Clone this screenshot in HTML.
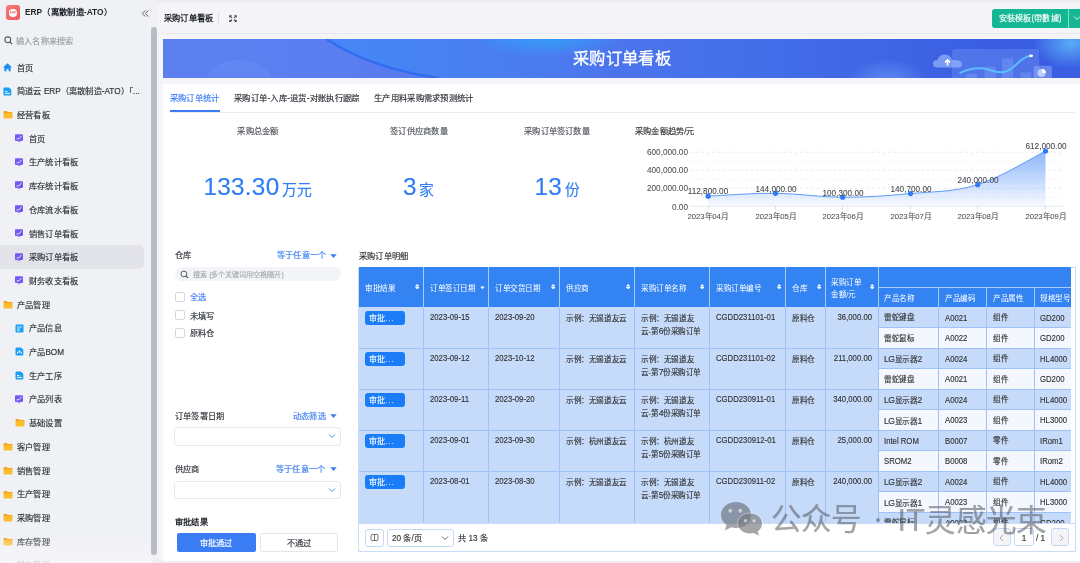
<!DOCTYPE html><html lang="zh-CN"><head><meta charset="utf-8"><style>
*{margin:0;padding:0;box-sizing:border-box}
html,body{width:1080px;height:563px;overflow:hidden;background:#eceef2;font-family:"Liberation Sans", sans-serif;}
#root{position:absolute;left:0;top:0;width:1080px;height:563px;will-change:transform}
.t{position:absolute;white-space:nowrap;-webkit-text-stroke-width:0.15px}
.b{position:absolute}
</style></head><body><div id="root">
<div class="b" style="left:0;top:0;width:157px;height:563px;background:#f0f1f5"></div>
<div class="b" style="left:6.1px;top:5.4px;width:14px;height:14.2px;border-radius:3px;background:linear-gradient(135deg,#f57b7b,#ec5a5a)"></div>
<div class="b" style="left:9px;top:8.7px;width:7.9px;height:7.9px;border-radius:50%;background:#fff"></div>
<svg class="b" style="left:9.8px;top:11.4px" width="6.4" height="2.6" viewBox="0 0 6.4 2.6"><path d="M0.3 0.3 H1.6 M0.3 1.3 H1.4 M0.3 2.3 H1.6 M0.3 0.3 V2.3 M2.3 2.4 V0.3 H3.3 Q3.9 0.3 3.9 0.9 Q3.9 1.4 3.3 1.4 H2.3 M3.1 1.4 L3.9 2.4 M4.6 2.4 V0.3 H5.5 Q6.1 0.3 6.1 0.9 Q6.1 1.5 5.5 1.5 H4.6" stroke="#e95d5d" stroke-width="0.55" fill="none"/></svg>
<div class="t" style="left:25.10px;top:7.30px;font-size:8px;line-height:12.0px;color:#1f2329;font-weight:bold;-webkit-text-stroke-width:0;transform:scale(1.0437,1.0437);transform-origin:left center;">ERP（离散制造-ATO）</div>
<svg class="b" style="left:141px;top:8.7px" width="9" height="9" viewBox="0 0 9 9"><path d="M4.3 1.4 L1.3 4.5 L4.3 7.6 M7.4 1.4 L4.4 4.5 L7.4 7.6" stroke="#5f636d" stroke-width="1" fill="none"/></svg>
<svg class="b" style="left:4px;top:36px" width="9" height="9" viewBox="0 0 9 9"><circle cx="3.8" cy="3.8" r="2.9" stroke="#555a64" stroke-width="1.1" fill="none"/><path d="M6 6 L8.2 8.2" stroke="#555a64" stroke-width="1.2"/></svg>
<div class="t" style="left:15.80px;top:35.70px;font-size:8px;line-height:12.0px;color:#9a9ca3;font-weight:normal;transform:scale(1.0250,1.0250);transform-origin:left center;">输入名称来搜索</div>
<div class="b" style="left:0;top:245px;width:144px;height:24px;background:#e3e4ea;border-radius:0 5px 5px 0"></div>
<svg class="b" style="left:2.7px;top:62.900000000000006px" width="9" height="9" viewBox="0 0 9 9"><path d="M4.5 0.2 L9 4.2 L7.7 4.2 L7.7 8.2 L5.5 8.2 L5.5 5.9 L3.5 5.9 L3.5 8.2 L1.3 8.2 L1.3 4.2 L0 4.2 Z" fill="#1e90f5"/></svg>
<div class="t" style="left:17.20px;top:62.60px;font-size:8px;line-height:12.0px;color:#2b2f36;font-weight:normal;transform:scale(1.0250,1.0250);transform-origin:left center;">首页</div>
<svg class="b" style="left:3px;top:86.6px" width="9" height="9" viewBox="0 0 9 9"><path d="M1.3 0.5 H6 L8.3 2.8 V7.7 Q8.3 8.5 7.5 8.5 H1.3 Q0.5 8.5 0.5 7.7 V1.3 Q0.5 0.5 1.3 0.5Z" fill="#1a9ff2"/><path d="M2 4.6 H4.5 M2 6.4 H7" stroke="#fff" stroke-width="0.9"/></svg>
<div class="t" style="left:17.20px;top:86.30px;font-size:8px;line-height:12.0px;color:#2b2f36;font-weight:normal;transform:scale(1.0250,1.0250);transform-origin:left center;">简道云 ERP（离散制造-ATO）「...</div>
<svg class="b" style="left:3px;top:110.3px" width="10" height="9" viewBox="0 0 10 9"><path d="M0.5 1.8 Q0.5 1 1.3 1 H3.8 L4.8 2 H8.7 Q9.5 2 9.5 2.8 V3.2 H0.5Z" fill="#f7a318"/><path d="M0.5 3 H9.5 V7.6 Q9.5 8.4 8.7 8.4 H1.3 Q0.5 8.4 0.5 7.6Z" fill="#fbbd2e"/></svg>
<div class="t" style="left:17.20px;top:110.00px;font-size:8px;line-height:12.0px;color:#2b2f36;font-weight:normal;transform:scale(1.0250,1.0250);transform-origin:left center;">经营看板</div>
<svg class="b" style="left:15px;top:134.0px" width="9" height="9" viewBox="0 0 9 9"><rect x="0" y="0.3" width="8" height="6.6" rx="0.9" fill="#7459ef"/><rect x="2.7" y="6.8" width="2.6" height="1.5" rx="0.5" fill="#a796f7"/><path d="M1.5 5 L4.3 4.5 L6.5 1.9" stroke="#fff" stroke-width="0.95" fill="none" opacity="0.85"/></svg>
<div class="t" style="left:28.90px;top:133.70px;font-size:8px;line-height:12.0px;color:#2b2f36;font-weight:normal;transform:scale(1.0250,1.0250);transform-origin:left center;">首页</div>
<svg class="b" style="left:15px;top:157.7px" width="9" height="9" viewBox="0 0 9 9"><rect x="0" y="0.3" width="8" height="6.6" rx="0.9" fill="#7459ef"/><rect x="2.7" y="6.8" width="2.6" height="1.5" rx="0.5" fill="#a796f7"/><path d="M1.5 5 L4.3 4.5 L6.5 1.9" stroke="#fff" stroke-width="0.95" fill="none" opacity="0.85"/></svg>
<div class="t" style="left:28.90px;top:157.40px;font-size:8px;line-height:12.0px;color:#2b2f36;font-weight:normal;transform:scale(1.0250,1.0250);transform-origin:left center;">生产统计看板</div>
<svg class="b" style="left:15px;top:181.4px" width="9" height="9" viewBox="0 0 9 9"><rect x="0" y="0.3" width="8" height="6.6" rx="0.9" fill="#7459ef"/><rect x="2.7" y="6.8" width="2.6" height="1.5" rx="0.5" fill="#a796f7"/><path d="M1.5 5 L4.3 4.5 L6.5 1.9" stroke="#fff" stroke-width="0.95" fill="none" opacity="0.85"/></svg>
<div class="t" style="left:28.90px;top:181.10px;font-size:8px;line-height:12.0px;color:#2b2f36;font-weight:normal;transform:scale(1.0250,1.0250);transform-origin:left center;">库存统计看板</div>
<svg class="b" style="left:15px;top:205.1px" width="9" height="9" viewBox="0 0 9 9"><rect x="0" y="0.3" width="8" height="6.6" rx="0.9" fill="#7459ef"/><rect x="2.7" y="6.8" width="2.6" height="1.5" rx="0.5" fill="#a796f7"/><path d="M1.5 5 L4.3 4.5 L6.5 1.9" stroke="#fff" stroke-width="0.95" fill="none" opacity="0.85"/></svg>
<div class="t" style="left:28.90px;top:204.80px;font-size:8px;line-height:12.0px;color:#2b2f36;font-weight:normal;transform:scale(1.0250,1.0250);transform-origin:left center;">仓库流水看板</div>
<svg class="b" style="left:15px;top:228.8px" width="9" height="9" viewBox="0 0 9 9"><rect x="0" y="0.3" width="8" height="6.6" rx="0.9" fill="#7459ef"/><rect x="2.7" y="6.8" width="2.6" height="1.5" rx="0.5" fill="#a796f7"/><path d="M1.5 5 L4.3 4.5 L6.5 1.9" stroke="#fff" stroke-width="0.95" fill="none" opacity="0.85"/></svg>
<div class="t" style="left:28.90px;top:228.50px;font-size:8px;line-height:12.0px;color:#2b2f36;font-weight:normal;transform:scale(1.0250,1.0250);transform-origin:left center;">销售订单看板</div>
<svg class="b" style="left:15px;top:252.5px" width="9" height="9" viewBox="0 0 9 9"><rect x="0" y="0.3" width="8" height="6.6" rx="0.9" fill="#7459ef"/><rect x="2.7" y="6.8" width="2.6" height="1.5" rx="0.5" fill="#a796f7"/><path d="M1.5 5 L4.3 4.5 L6.5 1.9" stroke="#fff" stroke-width="0.95" fill="none" opacity="0.85"/></svg>
<div class="t" style="left:28.90px;top:252.20px;font-size:8px;line-height:12.0px;color:#2b2f36;font-weight:normal;transform:scale(1.0250,1.0250);transform-origin:left center;">采购订单看板</div>
<svg class="b" style="left:15px;top:276.2px" width="9" height="9" viewBox="0 0 9 9"><rect x="0" y="0.3" width="8" height="6.6" rx="0.9" fill="#7459ef"/><rect x="2.7" y="6.8" width="2.6" height="1.5" rx="0.5" fill="#a796f7"/><path d="M1.5 5 L4.3 4.5 L6.5 1.9" stroke="#fff" stroke-width="0.95" fill="none" opacity="0.85"/></svg>
<div class="t" style="left:28.90px;top:275.90px;font-size:8px;line-height:12.0px;color:#2b2f36;font-weight:normal;transform:scale(1.0250,1.0250);transform-origin:left center;">财务收支看板</div>
<svg class="b" style="left:3px;top:299.9px" width="10" height="9" viewBox="0 0 10 9"><path d="M0.5 1.8 Q0.5 1 1.3 1 H3.8 L4.8 2 H8.7 Q9.5 2 9.5 2.8 V3.2 H0.5Z" fill="#f7a318"/><path d="M0.5 3 H9.5 V7.6 Q9.5 8.4 8.7 8.4 H1.3 Q0.5 8.4 0.5 7.6Z" fill="#fbbd2e"/></svg>
<div class="t" style="left:17.20px;top:299.60px;font-size:8px;line-height:12.0px;color:#2b2f36;font-weight:normal;transform:scale(1.0250,1.0250);transform-origin:left center;">产品管理</div>
<svg class="b" style="left:15px;top:323.6px" width="9" height="9" viewBox="0 0 9 9"><rect x="0.5" y="0.5" width="8" height="8" rx="1" fill="#1a9ff2"/><path d="M2 3 H7 M2 5 H5 M2 6.7 H4.5" stroke="#fff" stroke-width="0.8"/></svg>
<div class="t" style="left:28.90px;top:323.30px;font-size:8px;line-height:12.0px;color:#2b2f36;font-weight:normal;transform:scale(1.0250,1.0250);transform-origin:left center;">产品信息</div>
<svg class="b" style="left:15px;top:347.3px" width="9" height="9" viewBox="0 0 9 9"><path d="M1.3 0.5 H6 L8.3 2.8 V7.7 Q8.3 8.5 7.5 8.5 H1.3 Q0.5 8.5 0.5 7.7 V1.3 Q0.5 0.5 1.3 0.5Z" fill="#1a9ff2"/><path d="M4.4 3 V5 M2.5 6.8 V5 H6.3 V6.8" stroke="#fff" stroke-width="0.8" fill="none"/></svg>
<div class="t" style="left:28.90px;top:347.00px;font-size:8px;line-height:12.0px;color:#2b2f36;font-weight:normal;transform:scale(1.0250,1.0250);transform-origin:left center;">产品BOM</div>
<svg class="b" style="left:15px;top:371.0px" width="9" height="9" viewBox="0 0 9 9"><path d="M1.3 0.5 H6 L8.3 2.8 V7.7 Q8.3 8.5 7.5 8.5 H1.3 Q0.5 8.5 0.5 7.7 V1.3 Q0.5 0.5 1.3 0.5Z" fill="#1a9ff2"/><path d="M2 4.6 H4.5 M2 6.4 H7" stroke="#fff" stroke-width="0.9"/></svg>
<div class="t" style="left:28.90px;top:370.70px;font-size:8px;line-height:12.0px;color:#2b2f36;font-weight:normal;transform:scale(1.0250,1.0250);transform-origin:left center;">生产工序</div>
<svg class="b" style="left:15px;top:394.7px" width="9" height="9" viewBox="0 0 9 9"><rect x="0" y="0.3" width="8" height="6.6" rx="0.9" fill="#7459ef"/><rect x="2.7" y="6.8" width="2.6" height="1.5" rx="0.5" fill="#a796f7"/><path d="M1.5 5 L4.3 4.5 L6.5 1.9" stroke="#fff" stroke-width="0.95" fill="none" opacity="0.85"/></svg>
<div class="t" style="left:28.90px;top:394.40px;font-size:8px;line-height:12.0px;color:#2b2f36;font-weight:normal;transform:scale(1.0250,1.0250);transform-origin:left center;">产品列表</div>
<svg class="b" style="left:15px;top:418.4px" width="10" height="9" viewBox="0 0 10 9"><path d="M0.5 1.8 Q0.5 1 1.3 1 H3.8 L4.8 2 H8.7 Q9.5 2 9.5 2.8 V3.2 H0.5Z" fill="#f7a318"/><path d="M0.5 3 H9.5 V7.6 Q9.5 8.4 8.7 8.4 H1.3 Q0.5 8.4 0.5 7.6Z" fill="#fbbd2e"/></svg>
<div class="t" style="left:28.90px;top:418.10px;font-size:8px;line-height:12.0px;color:#2b2f36;font-weight:normal;transform:scale(1.0250,1.0250);transform-origin:left center;">基础设置</div>
<svg class="b" style="left:3px;top:442.1px" width="10" height="9" viewBox="0 0 10 9"><path d="M0.5 1.8 Q0.5 1 1.3 1 H3.8 L4.8 2 H8.7 Q9.5 2 9.5 2.8 V3.2 H0.5Z" fill="#f7a318"/><path d="M0.5 3 H9.5 V7.6 Q9.5 8.4 8.7 8.4 H1.3 Q0.5 8.4 0.5 7.6Z" fill="#fbbd2e"/></svg>
<div class="t" style="left:17.20px;top:441.80px;font-size:8px;line-height:12.0px;color:#2b2f36;font-weight:normal;transform:scale(1.0250,1.0250);transform-origin:left center;">客户管理</div>
<svg class="b" style="left:3px;top:465.8px" width="10" height="9" viewBox="0 0 10 9"><path d="M0.5 1.8 Q0.5 1 1.3 1 H3.8 L4.8 2 H8.7 Q9.5 2 9.5 2.8 V3.2 H0.5Z" fill="#f7a318"/><path d="M0.5 3 H9.5 V7.6 Q9.5 8.4 8.7 8.4 H1.3 Q0.5 8.4 0.5 7.6Z" fill="#fbbd2e"/></svg>
<div class="t" style="left:17.20px;top:465.50px;font-size:8px;line-height:12.0px;color:#2b2f36;font-weight:normal;transform:scale(1.0250,1.0250);transform-origin:left center;">销售管理</div>
<svg class="b" style="left:3px;top:489.5px" width="10" height="9" viewBox="0 0 10 9"><path d="M0.5 1.8 Q0.5 1 1.3 1 H3.8 L4.8 2 H8.7 Q9.5 2 9.5 2.8 V3.2 H0.5Z" fill="#f7a318"/><path d="M0.5 3 H9.5 V7.6 Q9.5 8.4 8.7 8.4 H1.3 Q0.5 8.4 0.5 7.6Z" fill="#fbbd2e"/></svg>
<div class="t" style="left:17.20px;top:489.20px;font-size:8px;line-height:12.0px;color:#2b2f36;font-weight:normal;transform:scale(1.0250,1.0250);transform-origin:left center;">生产管理</div>
<svg class="b" style="left:3px;top:513.2px" width="10" height="9" viewBox="0 0 10 9"><path d="M0.5 1.8 Q0.5 1 1.3 1 H3.8 L4.8 2 H8.7 Q9.5 2 9.5 2.8 V3.2 H0.5Z" fill="#f7a318"/><path d="M0.5 3 H9.5 V7.6 Q9.5 8.4 8.7 8.4 H1.3 Q0.5 8.4 0.5 7.6Z" fill="#fbbd2e"/></svg>
<div class="t" style="left:17.20px;top:512.90px;font-size:8px;line-height:12.0px;color:#2b2f36;font-weight:normal;transform:scale(1.0250,1.0250);transform-origin:left center;">采购管理</div>
<svg class="b" style="left:3px;top:536.9px" width="10" height="9" viewBox="0 0 10 9"><path d="M0.5 1.8 Q0.5 1 1.3 1 H3.8 L4.8 2 H8.7 Q9.5 2 9.5 2.8 V3.2 H0.5Z" fill="#f7a318"/><path d="M0.5 3 H9.5 V7.6 Q9.5 8.4 8.7 8.4 H1.3 Q0.5 8.4 0.5 7.6Z" fill="#fbbd2e"/></svg>
<div class="t" style="left:17.20px;top:536.60px;font-size:8px;line-height:12.0px;color:#2b2f36;font-weight:normal;transform:scale(1.0250,1.0250);transform-origin:left center;">库存管理</div>
<svg class="b" style="left:3px;top:560.6px" width="10" height="9" viewBox="0 0 10 9"><path d="M0.5 1.8 Q0.5 1 1.3 1 H3.8 L4.8 2 H8.7 Q9.5 2 9.5 2.8 V3.2 H0.5Z" fill="#f7a318"/><path d="M0.5 3 H9.5 V7.6 Q9.5 8.4 8.7 8.4 H1.3 Q0.5 8.4 0.5 7.6Z" fill="#fbbd2e"/></svg>
<div class="t" style="left:17.20px;top:560.30px;font-size:8px;line-height:12.0px;color:#2b2f36;font-weight:normal;transform:scale(1.0250,1.0250);transform-origin:left center;">财务管理</div>
<div class="b" style="left:151px;top:27px;width:5.5px;height:528px;background:#b9bcc5;border-radius:3px"></div>
<div class="b" style="left:0;top:535px;width:151px;height:28px;background:linear-gradient(180deg,rgba(246,247,250,0) 0%,rgba(246,247,250,0.85) 100%)"></div>
<div class="b" style="left:156.5px;top:3px;width:924px;height:558px;background:#f5f5f9;border-radius:6px 0 0 6px"></div>
<div class="b" style="left:156.5px;top:33px;width:924px;height:1px;background:#e8e9ee"></div>
<div class="t" style="left:164.30px;top:12.60px;font-size:8px;line-height:12.0px;color:#1f2329;font-weight:bold;-webkit-text-stroke-width:0;transform:scale(1.0312,1.0312);transform-origin:left center;">采购订单看板</div>
<div class="b" style="left:218px;top:12px;width:1px;height:12px;background:#e0e1e6"></div>
<svg class="b" style="left:229.2px;top:14.7px" width="8" height="7.4" viewBox="0 0 8 7.4"><path d="M0.3 0.3 H3 L0.3 3 Z M7.7 0.3 V3 L5 0.3 Z M7.7 7.1 H5 L7.7 4.4 Z M0.3 7.1 V4.4 L3 7.1 Z" fill="#3d4149"/><path d="M1.2 1.2 L3 2.9 M6.8 1.2 L5 2.9 M6.8 6.2 L5 4.5 M1.2 6.2 L3 4.5" stroke="#3d4149" stroke-width="1.1"/></svg>
<div class="b" style="left:991.5px;top:9px;width:100px;height:19px;background:#13b794;border-radius:3px"></div>
<div class="b" style="left:1068px;top:9px;width:0.8px;height:19px;background:#8fdcc9"></div>
<div class="t" style="left:998.80px;top:13.40px;font-size:8px;line-height:12.0px;color:#fff;font-weight:normal;transform:scale(1.0188,1.0188);transform-origin:left center;">安裝模板(帶數據)</div>
<svg class="b" style="left:1073px;top:15px" width="8" height="6" viewBox="0 0 8 6"><path d="M1 1.5 L4 4.5 L7 1.5" stroke="#fff" stroke-width="0.9" fill="none"/></svg>
<div class="b" style="left:163px;top:39.3px;width:917px;height:38.5px;overflow:hidden;background:linear-gradient(90deg,#5d80f1 0%,#5a7df0 20%,#5479ef 32%,#4b74ec 50%,#4570ea 62%,#3f66e5 78%,#3a5ee2 90%,#3a5de2 100%)">
<svg width="917" height="39" style="position:absolute;left:0;top:0" viewBox="0 0 917 39">
<defs>
<radialGradient id="g1" cx="0.5" cy="0.5" r="0.5"><stop offset="0" stop-color="#7fb0ff" stop-opacity="0.5"/><stop offset="1" stop-color="#7fb0ff" stop-opacity="0"/></radialGradient>
<radialGradient id="g3" cx="0.5" cy="0.5" r="0.5"><stop offset="0" stop-color="#5fc0fb" stop-opacity="0.9"/><stop offset="1" stop-color="#5fc0fb" stop-opacity="0"/></radialGradient>
<radialGradient id="cy" cx="0.5" cy="0.5" r="0.5"><stop offset="0" stop-color="#2fa6fb" stop-opacity="0.85"/><stop offset="1" stop-color="#2fa6fb" stop-opacity="0"/></radialGradient>
<linearGradient id="el" gradientUnits="userSpaceOnUse" x1="160" y1="0" x2="470" y2="0"><stop offset="0" stop-color="#3d8af7" stop-opacity="0.75"/><stop offset="0.6" stop-color="#3f86f6" stop-opacity="0.45"/><stop offset="1" stop-color="#4a80f0" stop-opacity="0"/></linearGradient>
<linearGradient id="bl" x1="0" y1="0" x2="0" y2="1"><stop offset="0" stop-color="#7aa6fa" stop-opacity="0.55"/><stop offset="1" stop-color="#7aa6fa" stop-opacity="0.25"/></linearGradient>
</defs>
<ellipse cx="76" cy="46" rx="34" ry="25" fill="url(#bl)" opacity="0.35"/>
<ellipse cx="340" cy="-65" rx="219" ry="110" fill="url(#el)"/>
<ellipse cx="385" cy="-2" rx="75" ry="20" fill="url(#cy)"/>
<path d="M163.5,0 A219,110 0 0,0 275,39" stroke="#2a64ee" stroke-width="2.2" fill="none" opacity="0.75"/>
<ellipse cx="725" cy="42" rx="40" ry="22" fill="url(#g1)" opacity="1"/>
<ellipse cx="908" cy="4" rx="38" ry="26" fill="url(#g3)" opacity="0.9"/>
<rect x="789" y="10" width="87" height="30" rx="3" fill="#8fb4ff" opacity="0.25"/>
<path d="M774 28.5 Q770 28.5 770 25 Q770 21 774.5 21 Q776 15 782.5 15.5 Q788 16 789 21 Q799 20.5 799 25 Q799 28.5 795 28.5 Z" fill="#a4c2ff" opacity="0.6"/>
<path d="M784.5 26.5 V21.5 M782 23.5 L784.5 21 L787 23.5" stroke="#fff" stroke-width="1.6" fill="none"/>
<rect x="803" y="35" width="11" height="5" fill="#8fb4ff" opacity="0.3"/>
<rect x="821.6" y="27.7" width="11" height="12" fill="#8fb4ff" opacity="0.3"/>
<rect x="839" y="19.4" width="11" height="20" fill="#8fb4ff" opacity="0.3"/>
<rect x="857.7" y="33.3" width="10.5" height="7" fill="#8fb4ff" opacity="0.3"/>
<path d="M796.6 34.2 C805 30 813 28.7 820.7 29.5 C828 30.3 832 34 840 33.3 C848 32.6 853 25 859 20.5 C862 18.3 865 17 868 16.8" stroke="#5cc3ff" stroke-width="2" fill="none" opacity="0.9"/>
<ellipse cx="868" cy="16.8" rx="2.1" ry="1.4" fill="#fff"/>
<rect x="870.7" y="26.7" width="18.2" height="13" rx="2" fill="#a9c4ff" opacity="0.4"/>
<circle cx="878.5" cy="34" r="4" fill="#c9d9ff" opacity="0.85"/>
<path d="M879 30 A4 4 0 0 1 883 34 L879 34Z" fill="#fff"/>
</svg></div>
<div class="t" style="left:521.90px;width:200px;text-align:center;top:47.20px;font-size:16px;line-height:24.0px;color:#fff;font-weight:normal;transform:scale(1.0188,1.0188);transform-origin:center center;-webkit-text-stroke:0.3px #fff;">采购订单看板</div>
<div class="b" style="left:163px;top:84px;width:917px;height:477px;background:#fff"></div>
<div class="t" style="left:170.20px;top:93.00px;font-size:8px;line-height:12.0px;color:#3a7cf4;font-weight:normal;transform:scale(1.0312,1.0312);transform-origin:left center;">采购订单统计</div>
<div class="t" style="left:234.30px;top:93.00px;font-size:8px;line-height:12.0px;color:#2b2f36;font-weight:normal;transform:scale(1.0437,1.0437);transform-origin:left center;">采购订单<span style="margin:0 0.1px">-</span>入库<span style="margin:0 0.1px">-</span>退货<span style="margin:0 0.1px">-</span>对账执行跟踪</div>
<div class="t" style="left:374.00px;top:93.00px;font-size:8px;line-height:12.0px;color:#2b2f36;font-weight:normal;transform:scale(1.0375,1.0375);transform-origin:left center;">生产用料采购需求预测统计</div>
<div class="b" style="left:170px;top:112px;width:905px;height:1px;background:#ebecef"></div>
<div class="b" style="left:170px;top:110.3px;width:49.6px;height:1.8px;background:#3a7cf4"></div>
<div class="t" style="left:197.80px;width:120px;text-align:center;top:125.80px;font-size:8px;line-height:12.0px;color:#4e5258;font-weight:normal;transform:scale(1.0312,1.0312);transform-origin:center center;">采购总金额</div>
<div class="t" style="left:157.8px;width:200px;text-align:center;top:170px;line-height:34px;color:#2e7cf6"><span style="font-size:24.3px;letter-spacing:0.25px">133.30</span><span style="font-size:14.8px;margin-left:2.6px">万元</span></div>
<div class="t" style="left:358.80px;width:120px;text-align:center;top:125.80px;font-size:8px;line-height:12.0px;color:#4e5258;font-weight:normal;transform:scale(1.0312,1.0312);transform-origin:center center;">签订供应商数量</div>
<div class="t" style="left:318.8px;width:200px;text-align:center;top:170px;line-height:34px;color:#2e7cf6"><span style="font-size:24.3px;letter-spacing:0.25px">3</span><span style="font-size:14.8px;margin-left:2.6px">家</span></div>
<div class="t" style="left:497.00px;width:120px;text-align:center;top:125.80px;font-size:8px;line-height:12.0px;color:#4e5258;font-weight:normal;transform:scale(1.0312,1.0312);transform-origin:center center;">采购订单签订数量</div>
<div class="t" style="left:457px;width:200px;text-align:center;top:170px;line-height:34px;color:#2e7cf6"><span style="font-size:24.3px;letter-spacing:0.25px">13</span><span style="font-size:14.8px;margin-left:2.6px">份</span></div>
<div class="t" style="left:635.00px;top:126.20px;font-size:8px;line-height:12.0px;color:#333;font-weight:normal;transform:scale(1.0250,1.0250);transform-origin:left center;">采购金额趋势/元</div>
<svg class="b" style="left:0;top:0" width="1080" height="563" viewBox="0 0 1080 563"><line x1="690" y1="188.3" x2="1063.5" y2="188.3" stroke="#e9e9e9" stroke-width="0.8" stroke-dasharray="3,2.5"/><line x1="690" y1="170.2" x2="1063.5" y2="170.2" stroke="#e9e9e9" stroke-width="0.8" stroke-dasharray="3,2.5"/><line x1="690" y1="152.2" x2="1063.5" y2="152.2" stroke="#e9e9e9" stroke-width="0.8" stroke-dasharray="3,2.5"/><line x1="690" y1="197.3" x2="1063.5" y2="197.3" stroke="#f1f1f1" stroke-width="0.8" stroke-dasharray="3,2.5"/><line x1="690" y1="179.2" x2="1063.5" y2="179.2" stroke="#f1f1f1" stroke-width="0.8" stroke-dasharray="3,2.5"/><line x1="690" y1="161.2" x2="1063.5" y2="161.2" stroke="#f1f1f1" stroke-width="0.8" stroke-dasharray="3,2.5"/><line x1="690" y1="206.3" x2="1063.5" y2="206.3" stroke="#e3e6ec" stroke-width="0.8"/><line x1="708.1" y1="206.3" x2="708.1" y2="209.3" stroke="#d0d4dd" stroke-width="0.8"/><line x1="775.5" y1="206.3" x2="775.5" y2="209.3" stroke="#d0d4dd" stroke-width="0.8"/><line x1="842.7" y1="206.3" x2="842.7" y2="209.3" stroke="#d0d4dd" stroke-width="0.8"/><line x1="910.5" y1="206.3" x2="910.5" y2="209.3" stroke="#d0d4dd" stroke-width="0.8"/><line x1="977.7" y1="206.3" x2="977.7" y2="209.3" stroke="#d0d4dd" stroke-width="0.8"/><line x1="1045.5" y1="206.3" x2="1045.5" y2="209.3" stroke="#d0d4dd" stroke-width="0.8"/><defs><linearGradient id="ar" x1="0" y1="0" x2="0" y2="1"><stop offset="0" stop-color="#3f86f7" stop-opacity="0.6"/><stop offset="1" stop-color="#3f86f7" stop-opacity="0.04"/></linearGradient></defs><path d="M708.10,196.13 C719.89,195.64 751.95,193.12 775.50,193.32 C799.05,193.51 819.08,197.20 842.70,197.26 C866.33,197.31 886.88,195.82 910.50,193.61 C934.12,191.41 954.08,192.10 977.70,184.66 C1001.33,177.22 1033.63,156.99 1045.50,151.12 L1045.5,206.3 L708.1,206.3 Z" fill="url(#ar)"/><path d="M708.10,196.13 C719.89,195.64 751.95,193.12 775.50,193.32 C799.05,193.51 819.08,197.20 842.70,197.26 C866.33,197.31 886.88,195.82 910.50,193.61 C934.12,191.41 954.08,192.10 977.70,184.66 C1001.33,177.22 1033.63,156.99 1045.50,151.12" stroke="#5b9af7" stroke-width="1" fill="none"/><circle cx="708.1" cy="196.13" r="2.6" fill="#2f7cf6"/><circle cx="775.5" cy="193.32" r="2.6" fill="#2f7cf6"/><circle cx="842.7" cy="197.26" r="2.6" fill="#2f7cf6"/><circle cx="910.5" cy="193.61" r="2.6" fill="#2f7cf6"/><circle cx="977.7" cy="184.66" r="2.6" fill="#2f7cf6"/><circle cx="1045.5" cy="151.12" r="2.6" fill="#2f7cf6"/></svg>
<div class="t" style="left:628.30px;width:60px;text-align:right;top:147.40px;font-size:8px;line-height:12.0px;color:#4a4d52;font-weight:normal;transform:scale(1.0250,1.0250);transform-origin:right center;-webkit-text-stroke-width:0.05px;">600,000.00</div>
<div class="t" style="left:628.30px;width:60px;text-align:right;top:165.43px;font-size:8px;line-height:12.0px;color:#4a4d52;font-weight:normal;transform:scale(1.0250,1.0250);transform-origin:right center;-webkit-text-stroke-width:0.05px;">400,000.00</div>
<div class="t" style="left:628.30px;width:60px;text-align:right;top:183.47px;font-size:8px;line-height:12.0px;color:#4a4d52;font-weight:normal;transform:scale(1.0250,1.0250);transform-origin:right center;-webkit-text-stroke-width:0.05px;">200,000.00</div>
<div class="t" style="left:628.30px;width:60px;text-align:right;top:201.50px;font-size:8px;line-height:12.0px;color:#4a4d52;font-weight:normal;transform:scale(1.0250,1.0250);transform-origin:right center;-webkit-text-stroke-width:0.05px;">0.00</div>
<div class="t" style="left:678.10px;width:60px;text-align:center;top:186.43px;font-size:8px;line-height:12.0px;color:#3f4247;font-weight:normal;transform:scale(1.0250,1.0250);transform-origin:center center;-webkit-text-stroke-width:0.05px;">112,800.00</div>
<div class="t" style="left:745.50px;width:60px;text-align:center;top:183.62px;font-size:8px;line-height:12.0px;color:#3f4247;font-weight:normal;transform:scale(1.0250,1.0250);transform-origin:center center;-webkit-text-stroke-width:0.05px;">144,000.00</div>
<div class="t" style="left:812.70px;width:60px;text-align:center;top:187.56px;font-size:8px;line-height:12.0px;color:#3f4247;font-weight:normal;transform:scale(1.0250,1.0250);transform-origin:center center;-webkit-text-stroke-width:0.05px;">100,300.00</div>
<div class="t" style="left:880.50px;width:60px;text-align:center;top:183.91px;font-size:8px;line-height:12.0px;color:#3f4247;font-weight:normal;transform:scale(1.0250,1.0250);transform-origin:center center;-webkit-text-stroke-width:0.05px;">140,700.00</div>
<div class="t" style="left:947.70px;width:60px;text-align:center;top:174.96px;font-size:8px;line-height:12.0px;color:#3f4247;font-weight:normal;transform:scale(1.0250,1.0250);transform-origin:center center;-webkit-text-stroke-width:0.05px;">240,000.00</div>
<div class="t" style="left:1015.50px;width:60px;text-align:center;top:141.42px;font-size:8px;line-height:12.0px;color:#3f4247;font-weight:normal;transform:scale(1.0250,1.0250);transform-origin:center center;-webkit-text-stroke-width:0.05px;">612,000.00</div>
<div class="t" style="left:678.10px;width:60px;text-align:center;top:211.40px;font-size:8px;line-height:12.0px;color:#4a4d52;font-weight:normal;transform:scale(0.9625,0.9625);transform-origin:center center;-webkit-text-stroke-width:0.05px;">2023年04月</div>
<div class="t" style="left:745.50px;width:60px;text-align:center;top:211.40px;font-size:8px;line-height:12.0px;color:#4a4d52;font-weight:normal;transform:scale(0.9625,0.9625);transform-origin:center center;-webkit-text-stroke-width:0.05px;">2023年05月</div>
<div class="t" style="left:812.70px;width:60px;text-align:center;top:211.40px;font-size:8px;line-height:12.0px;color:#4a4d52;font-weight:normal;transform:scale(0.9625,0.9625);transform-origin:center center;-webkit-text-stroke-width:0.05px;">2023年06月</div>
<div class="t" style="left:880.50px;width:60px;text-align:center;top:211.40px;font-size:8px;line-height:12.0px;color:#4a4d52;font-weight:normal;transform:scale(0.9625,0.9625);transform-origin:center center;-webkit-text-stroke-width:0.05px;">2023年07月</div>
<div class="t" style="left:947.70px;width:60px;text-align:center;top:211.40px;font-size:8px;line-height:12.0px;color:#4a4d52;font-weight:normal;transform:scale(0.9625,0.9625);transform-origin:center center;-webkit-text-stroke-width:0.05px;">2023年08月</div>
<div class="t" style="left:1015.50px;width:60px;text-align:center;top:211.40px;font-size:8px;line-height:12.0px;color:#4a4d52;font-weight:normal;transform:scale(0.9625,0.9625);transform-origin:center center;-webkit-text-stroke-width:0.05px;">2023年09月</div>
<div class="t" style="left:175.00px;top:250.20px;font-size:8px;line-height:12.0px;color:#2b2f36;font-weight:normal;transform:scale(1.0250,1.0250);transform-origin:left center;">仓库</div>
<div class="t" style="left:276.60px;top:250.20px;font-size:8px;line-height:12.0px;color:#3a7cf4;font-weight:normal;transform:scale(1.0250,1.0250);transform-origin:left center;">等于任意一个</div>
<svg class="b" style="left:329.8px;top:252.5px" width="7" height="6" viewBox="0 0 7 6"><path d="M0.3 1.3 L6.7 1.3 L3.5 5 Z" fill="#3a7cf4"/></svg>
<div class="b" style="left:175px;top:267px;width:165.6px;height:13.7px;background:#f3f4f7;border-radius:7px"></div>
<svg class="b" style="left:180px;top:269.8px" width="9" height="9" viewBox="0 0 9 9"><circle cx="3.9" cy="3.9" r="2.9" stroke="#555a64" stroke-width="1" fill="none"/><path d="M6 6 L8 8" stroke="#555a64" stroke-width="1.1"/></svg>
<div class="t" style="left:193.20px;top:269.95px;font-size:7px;line-height:10.5px;color:#a5a8ae;font-weight:normal;">搜索 (多个关键词用空格隔开)</div>
<div class="b" style="left:174.6px;top:292.2px;width:10px;height:10px;border:1px solid #d4d7de;border-radius:2px;background:#fff"></div>
<div class="t" style="left:189.50px;top:292.40px;font-size:8px;line-height:12.0px;color:#3a7cf4;font-weight:normal;transform:scale(1.0250,1.0250);transform-origin:left center;">全选</div>
<div class="b" style="left:174.6px;top:310.3px;width:10px;height:10px;border:1px solid #d4d7de;border-radius:2px;background:#fff"></div>
<div class="t" style="left:189.50px;top:310.50px;font-size:8px;line-height:12.0px;color:#2b2f36;font-weight:normal;transform:scale(1.0250,1.0250);transform-origin:left center;">未填写</div>
<div class="b" style="left:174.6px;top:328.1px;width:10px;height:10px;border:1px solid #d4d7de;border-radius:2px;background:#fff"></div>
<div class="t" style="left:189.50px;top:328.30px;font-size:8px;line-height:12.0px;color:#2b2f36;font-weight:normal;transform:scale(1.0250,1.0250);transform-origin:left center;">原料仓</div>
<div class="t" style="left:175.00px;top:410.50px;font-size:8px;line-height:12.0px;color:#2b2f36;font-weight:normal;transform:scale(1.0250,1.0250);transform-origin:left center;">订单签署日期</div>
<div class="t" style="left:293.40px;top:410.50px;font-size:8px;line-height:12.0px;color:#3a7cf4;font-weight:normal;transform:scale(1.0250,1.0250);transform-origin:left center;">动态筛选</div>
<svg class="b" style="left:329.8px;top:412.8px" width="7" height="6" viewBox="0 0 7 6"><path d="M0.3 1.3 L6.7 1.3 L3.5 5 Z" fill="#3a7cf4"/></svg>
<div class="b" style="left:174.3px;top:427px;width:166.3px;height:18.7px;border:1px solid #e7e8ec;border-radius:3px"></div>
<svg class="b" style="left:327.5px;top:433.3px" width="8" height="6" viewBox="0 0 8 6"><path d="M1 1.5 L4 4.5 L7 1.5" stroke="#3a7cf4" stroke-width="0.9" fill="none"/></svg>
<div class="t" style="left:175.00px;top:463.90px;font-size:8px;line-height:12.0px;color:#2b2f36;font-weight:normal;transform:scale(1.0250,1.0250);transform-origin:left center;">供应商</div>
<div class="t" style="left:276.40px;top:463.90px;font-size:8px;line-height:12.0px;color:#3a7cf4;font-weight:normal;transform:scale(1.0250,1.0250);transform-origin:left center;">等于任意一个</div>
<svg class="b" style="left:329.8px;top:466.2px" width="7" height="6" viewBox="0 0 7 6"><path d="M0.3 1.3 L6.7 1.3 L3.5 5 Z" fill="#3a7cf4"/></svg>
<div class="b" style="left:174.3px;top:480.7px;width:166.3px;height:18.3px;border:1px solid #e7e8ec;border-radius:3px"></div>
<svg class="b" style="left:327.5px;top:487px" width="8" height="6" viewBox="0 0 8 6"><path d="M1 1.5 L4 4.5 L7 1.5" stroke="#3a7cf4" stroke-width="0.9" fill="none"/></svg>
<div class="t" style="left:175.00px;top:517.20px;font-size:8px;line-height:12.0px;color:#1f2329;font-weight:bold;-webkit-text-stroke-width:0;transform:scale(1.0250,1.0250);transform-origin:left center;">审批结果</div>
<div class="b" style="left:177px;top:533px;width:78.5px;height:19.3px;background:#3a7cf4;border-radius:2px"></div>
<div class="t" style="left:177.20px;width:78px;text-align:center;top:537.80px;font-size:8px;line-height:12.0px;color:#fff;font-weight:normal;transform:scale(1.0250,1.0250);transform-origin:center center;">审批通过</div>
<div class="b" style="left:260.3px;top:533px;width:78.2px;height:19.3px;border:1px solid #e5e6eb;border-radius:2px;background:#fff"></div>
<div class="t" style="left:260.40px;width:78px;text-align:center;top:537.80px;font-size:8px;line-height:12.0px;color:#2b2f36;font-weight:normal;transform:scale(1.0250,1.0250);transform-origin:center center;">不通过</div>
<div class="t" style="left:359.00px;top:250.60px;font-size:8px;line-height:12.0px;color:#2b2f36;font-weight:normal;transform:scale(1.0250,1.0250);transform-origin:left center;">采购订单明细</div>
<div class="b" style="left:358.3px;top:266.5px;width:717.7px;height:285px;border:1px solid #c9dcf8;background:#fff"></div>
<div class="b" style="left:358.6px;top:267px;width:712.4px;height:256.20000000000005px;overflow:hidden"><div class="b" style="left:0.00px;top:0.00px;width:712.40px;height:40.00px;background:#3483f2"></div><div class="b" style="left:64.60px;top:0.00px;width:1.00px;height:40.00px;background:#a9cbfa"></div><div class="b" style="left:129.60px;top:0.00px;width:1.00px;height:40.00px;background:#a9cbfa"></div><div class="b" style="left:200.60px;top:0.00px;width:1.00px;height:40.00px;background:#a9cbfa"></div><div class="b" style="left:275.20px;top:0.00px;width:1.00px;height:40.00px;background:#a9cbfa"></div><div class="b" style="left:350.10px;top:0.00px;width:1.00px;height:40.00px;background:#a9cbfa"></div><div class="b" style="left:426.40px;top:0.00px;width:1.00px;height:40.00px;background:#a9cbfa"></div><div class="b" style="left:466.50px;top:0.00px;width:1.00px;height:40.00px;background:#a9cbfa"></div><div class="b" style="left:519.30px;top:0.00px;width:1.00px;height:40.00px;background:#a9cbfa"></div><div class="b" style="left:579.50px;top:20.30px;width:1.00px;height:19.70px;background:#a9cbfa"></div><div class="b" style="left:627.60px;top:20.30px;width:1.00px;height:19.70px;background:#a9cbfa"></div><div class="b" style="left:675.30px;top:20.30px;width:1.00px;height:19.70px;background:#a9cbfa"></div><div class="b" style="left:519.80px;top:19.80px;width:192.60px;height:1.00px;background:#a9cbfa"></div><div class="t" style="left:6.70px;top:15.60px;font-size:8px;line-height:12.0px;color:#fff;font-weight:normal;transform:scale(0.9500,0.9500);transform-origin:left center;-webkit-text-stroke-width:0;">审批结果</div><div class="t" style="left:71.80px;top:15.60px;font-size:8px;line-height:12.0px;color:#fff;font-weight:normal;transform:scale(0.9500,0.9500);transform-origin:left center;-webkit-text-stroke-width:0;">订单签订日期</div><div class="t" style="left:136.80px;top:15.60px;font-size:8px;line-height:12.0px;color:#fff;font-weight:normal;transform:scale(0.9500,0.9500);transform-origin:left center;-webkit-text-stroke-width:0;">订单交货日期</div><div class="t" style="left:207.80px;top:15.60px;font-size:8px;line-height:12.0px;color:#fff;font-weight:normal;transform:scale(0.9500,0.9500);transform-origin:left center;-webkit-text-stroke-width:0;">供应商</div><div class="t" style="left:282.40px;top:15.60px;font-size:8px;line-height:12.0px;color:#fff;font-weight:normal;transform:scale(0.9500,0.9500);transform-origin:left center;-webkit-text-stroke-width:0;">采购订单名称</div><div class="t" style="left:357.30px;top:15.60px;font-size:8px;line-height:12.0px;color:#fff;font-weight:normal;transform:scale(0.9500,0.9500);transform-origin:left center;-webkit-text-stroke-width:0;">采购订单编号</div><div class="t" style="left:433.60px;top:15.60px;font-size:8px;line-height:12.0px;color:#fff;font-weight:normal;transform:scale(0.9500,0.9500);transform-origin:left center;-webkit-text-stroke-width:0;">仓库</div><div class="t" style="left:472.00px;top:9.70px;font-size:8px;line-height:12.0px;color:#fff;font-weight:normal;transform:scale(0.9500,0.9500);transform-origin:left center;-webkit-text-stroke-width:0;">采购订单</div><div class="t" style="left:472.00px;top:21.50px;font-size:8px;line-height:12.0px;color:#fff;font-weight:normal;transform:scale(0.9500,0.9500);transform-origin:left center;-webkit-text-stroke-width:0;">金额/元</div><svg class="b" style="left:56.40px;top:17.40px" width="4.4" height="5.4" viewBox="0 0 4.4 5.4"><path d="M2.2 0.1 Q3.6 1.2 4.3 2.5 L0.1 2.5 Q0.8 1.2 2.2 0.1 Z M0.1 2.9 L4.3 2.9 Q3.6 4.2 2.2 5.3 Q0.8 4.2 0.1 2.9 Z" fill="#fff"/></svg><svg class="b" style="left:192.40px;top:17.40px" width="4.4" height="5.4" viewBox="0 0 4.4 5.4"><path d="M2.2 0.1 Q3.6 1.2 4.3 2.5 L0.1 2.5 Q0.8 1.2 2.2 0.1 Z M0.1 2.9 L4.3 2.9 Q3.6 4.2 2.2 5.3 Q0.8 4.2 0.1 2.9 Z" fill="#fff"/></svg><svg class="b" style="left:267.00px;top:17.40px" width="4.4" height="5.4" viewBox="0 0 4.4 5.4"><path d="M2.2 0.1 Q3.6 1.2 4.3 2.5 L0.1 2.5 Q0.8 1.2 2.2 0.1 Z M0.1 2.9 L4.3 2.9 Q3.6 4.2 2.2 5.3 Q0.8 4.2 0.1 2.9 Z" fill="#fff"/></svg><svg class="b" style="left:341.90px;top:17.40px" width="4.4" height="5.4" viewBox="0 0 4.4 5.4"><path d="M2.2 0.1 Q3.6 1.2 4.3 2.5 L0.1 2.5 Q0.8 1.2 2.2 0.1 Z M0.1 2.9 L4.3 2.9 Q3.6 4.2 2.2 5.3 Q0.8 4.2 0.1 2.9 Z" fill="#fff"/></svg><svg class="b" style="left:418.20px;top:17.40px" width="4.4" height="5.4" viewBox="0 0 4.4 5.4"><path d="M2.2 0.1 Q3.6 1.2 4.3 2.5 L0.1 2.5 Q0.8 1.2 2.2 0.1 Z M0.1 2.9 L4.3 2.9 Q3.6 4.2 2.2 5.3 Q0.8 4.2 0.1 2.9 Z" fill="#fff"/></svg><svg class="b" style="left:458.30px;top:17.40px" width="4.4" height="5.4" viewBox="0 0 4.4 5.4"><path d="M2.2 0.1 Q3.6 1.2 4.3 2.5 L0.1 2.5 Q0.8 1.2 2.2 0.1 Z M0.1 2.9 L4.3 2.9 Q3.6 4.2 2.2 5.3 Q0.8 4.2 0.1 2.9 Z" fill="#fff"/></svg><svg class="b" style="left:511.10px;top:17.40px" width="4.4" height="5.4" viewBox="0 0 4.4 5.4"><path d="M2.2 0.1 Q3.6 1.2 4.3 2.5 L0.1 2.5 Q0.8 1.2 2.2 0.1 Z M0.1 2.9 L4.3 2.9 Q3.6 4.2 2.2 5.3 Q0.8 4.2 0.1 2.9 Z" fill="#fff"/></svg><svg class="b" style="left:121.40px;top:18.50px" width="5" height="4" viewBox="0 0 5 4"><path d="M0.2 0.5 L4.6 0.5 L2.4 3.2 Z" fill="#fff"/></svg><div class="t" style="left:525.80px;top:25.80px;font-size:8px;line-height:12.0px;color:#fff;font-weight:normal;transform:scale(0.9500,0.9500);transform-origin:left center;-webkit-text-stroke-width:0;">产品名称</div><div class="t" style="left:586.00px;top:25.80px;font-size:8px;line-height:12.0px;color:#fff;font-weight:normal;transform:scale(0.9500,0.9500);transform-origin:left center;-webkit-text-stroke-width:0;">产品编码</div><div class="t" style="left:634.10px;top:25.80px;font-size:8px;line-height:12.0px;color:#fff;font-weight:normal;transform:scale(0.9500,0.9500);transform-origin:left center;-webkit-text-stroke-width:0;">产品属性</div><div class="t" style="left:681.80px;top:25.80px;font-size:8px;line-height:12.0px;color:#fff;font-weight:normal;transform:scale(0.9500,0.9500);transform-origin:left center;-webkit-text-stroke-width:0;">规格型号</div><div class="b" style="left:0.00px;top:40.00px;width:519.80px;height:41.00px;background:#c6dbfa"></div><div class="b" style="left:519.80px;top:40.00px;width:192.60px;height:20.50px;background:#c6dbfa"></div><div class="b" style="left:519.80px;top:60.50px;width:192.60px;height:20.50px;background:#f4f8fe"></div><div class="b" style="left:0.00px;top:81.00px;width:519.80px;height:41.00px;background:#c6dbfa"></div><div class="b" style="left:519.80px;top:81.00px;width:192.60px;height:20.50px;background:#c6dbfa"></div><div class="b" style="left:519.80px;top:101.50px;width:192.60px;height:20.50px;background:#f4f8fe"></div><div class="b" style="left:0.00px;top:122.00px;width:519.80px;height:41.00px;background:#c6dbfa"></div><div class="b" style="left:519.80px;top:122.00px;width:192.60px;height:20.50px;background:#c6dbfa"></div><div class="b" style="left:519.80px;top:142.50px;width:192.60px;height:20.50px;background:#f4f8fe"></div><div class="b" style="left:0.00px;top:163.00px;width:519.80px;height:41.00px;background:#c6dbfa"></div><div class="b" style="left:519.80px;top:163.00px;width:192.60px;height:20.50px;background:#c6dbfa"></div><div class="b" style="left:519.80px;top:183.50px;width:192.60px;height:20.50px;background:#f4f8fe"></div><div class="b" style="left:0.00px;top:204.00px;width:519.80px;height:61.50px;background:#c6dbfa"></div><div class="b" style="left:519.80px;top:204.00px;width:192.60px;height:20.50px;background:#c6dbfa"></div><div class="b" style="left:519.80px;top:224.50px;width:192.60px;height:20.50px;background:#f4f8fe"></div><div class="b" style="left:519.80px;top:245.00px;width:192.60px;height:20.50px;background:#c6dbfa"></div><div class="b" style="left:519.80px;top:60.00px;width:192.60px;height:1.00px;background:#9fc2f6"></div><div class="b" style="left:519.80px;top:80.50px;width:192.60px;height:1.00px;background:#9fc2f6"></div><div class="b" style="left:0.00px;top:80.50px;width:519.80px;height:1.00px;background:#9fc2f6"></div><div class="b" style="left:519.80px;top:101.00px;width:192.60px;height:1.00px;background:#9fc2f6"></div><div class="b" style="left:519.80px;top:121.50px;width:192.60px;height:1.00px;background:#9fc2f6"></div><div class="b" style="left:0.00px;top:121.50px;width:519.80px;height:1.00px;background:#9fc2f6"></div><div class="b" style="left:519.80px;top:142.00px;width:192.60px;height:1.00px;background:#9fc2f6"></div><div class="b" style="left:519.80px;top:162.50px;width:192.60px;height:1.00px;background:#9fc2f6"></div><div class="b" style="left:0.00px;top:162.50px;width:519.80px;height:1.00px;background:#9fc2f6"></div><div class="b" style="left:519.80px;top:183.00px;width:192.60px;height:1.00px;background:#9fc2f6"></div><div class="b" style="left:519.80px;top:203.50px;width:192.60px;height:1.00px;background:#9fc2f6"></div><div class="b" style="left:0.00px;top:203.50px;width:519.80px;height:1.00px;background:#9fc2f6"></div><div class="b" style="left:519.80px;top:224.00px;width:192.60px;height:1.00px;background:#9fc2f6"></div><div class="b" style="left:519.80px;top:244.50px;width:192.60px;height:1.00px;background:#9fc2f6"></div><div class="b" style="left:519.80px;top:265.00px;width:192.60px;height:1.00px;background:#9fc2f6"></div><div class="b" style="left:0.00px;top:265.00px;width:519.80px;height:1.00px;background:#9fc2f6"></div><div class="b" style="left:64.60px;top:40.00px;width:1.00px;height:216.20px;background:#9fc2f6"></div><div class="b" style="left:129.60px;top:40.00px;width:1.00px;height:216.20px;background:#9fc2f6"></div><div class="b" style="left:200.60px;top:40.00px;width:1.00px;height:216.20px;background:#9fc2f6"></div><div class="b" style="left:275.20px;top:40.00px;width:1.00px;height:216.20px;background:#9fc2f6"></div><div class="b" style="left:350.10px;top:40.00px;width:1.00px;height:216.20px;background:#9fc2f6"></div><div class="b" style="left:426.40px;top:40.00px;width:1.00px;height:216.20px;background:#9fc2f6"></div><div class="b" style="left:466.50px;top:40.00px;width:1.00px;height:216.20px;background:#9fc2f6"></div><div class="b" style="left:519.30px;top:40.00px;width:1.00px;height:216.20px;background:#9fc2f6"></div><div class="b" style="left:579.50px;top:40.00px;width:1.00px;height:216.20px;background:#9fc2f6"></div><div class="b" style="left:627.60px;top:40.00px;width:1.00px;height:216.20px;background:#9fc2f6"></div><div class="b" style="left:675.30px;top:40.00px;width:1.00px;height:216.20px;background:#9fc2f6"></div><div class="t" style="left:525.80px;top:45.20px;font-size:8px;line-height:12.0px;color:#333;font-weight:normal;transform:scale(0.9500,0.9500);transform-origin:left center;">雷蛇键盘</div><div class="t" style="left:586.00px;top:44.65px;font-size:9px;line-height:13.5px;color:#333;font-weight:normal;transform:scale(0.8600,0.9556);transform-origin:left center;">A0021</div><div class="t" style="left:634.10px;top:45.20px;font-size:8px;line-height:12.0px;color:#333;font-weight:normal;transform:scale(0.9500,0.9500);transform-origin:left center;">组件</div><div class="t" style="left:681.80px;top:44.65px;font-size:9px;line-height:13.5px;color:#333;font-weight:normal;transform:scale(0.8600,0.9556);transform-origin:left center;">GD200</div><div class="t" style="left:525.80px;top:65.70px;font-size:8px;line-height:12.0px;color:#333;font-weight:normal;transform:scale(0.9500,0.9500);transform-origin:left center;">雷蛇鼠标</div><div class="t" style="left:586.00px;top:65.15px;font-size:9px;line-height:13.5px;color:#333;font-weight:normal;transform:scale(0.8600,0.9556);transform-origin:left center;">A0022</div><div class="t" style="left:634.10px;top:65.70px;font-size:8px;line-height:12.0px;color:#333;font-weight:normal;transform:scale(0.9500,0.9500);transform-origin:left center;">组件</div><div class="t" style="left:681.80px;top:65.15px;font-size:9px;line-height:13.5px;color:#333;font-weight:normal;transform:scale(0.8600,0.9556);transform-origin:left center;">GD200</div><div class="b" style="left:6.10px;top:44.30px;width:40.8px;height:13.3px;background:#1a7cf6;border-radius:3px"></div><div class="t" style="left:10.70px;top:46.00px;font-size:8px;line-height:12.0px;color:#fff;font-weight:normal;-webkit-text-stroke-width:0.1px;">审批<span style="letter-spacing:0.9px">...</span></div><div class="t" style="left:71.10px;top:44.35px;font-size:9px;line-height:13.5px;color:#333;font-weight:normal;transform:scale(0.8600,0.9556);transform-origin:left center;">2023-09-15</div><div class="t" style="left:136.10px;top:44.35px;font-size:9px;line-height:13.5px;color:#333;font-weight:normal;transform:scale(0.8600,0.9556);transform-origin:left center;">2023-09-20</div><div class="t" style="left:207.10px;top:45.70px;font-size:8px;line-height:12.0px;color:#333;font-weight:normal;transform:scale(0.9500,0.9500);transform-origin:left center;">示例：无锡道友云</div><div class="t" style="left:282.60px;top:45.70px;font-size:8px;line-height:12.0px;color:#333;font-weight:normal;transform:scale(0.9500,0.9500);transform-origin:left center;">示例：无锡道友</div><div class="t" style="left:282.60px;top:57.50px;font-size:8px;line-height:12.0px;color:#333;font-weight:normal;transform:scale(0.9500,0.9500);transform-origin:left center;">云-第<span style="font-size:9.05px;letter-spacing:-0.47px">6</span>份采购订单</div><div class="t" style="left:357.20px;top:44.35px;font-size:9px;line-height:13.5px;color:#333;font-weight:normal;transform:scale(0.8600,0.9556);transform-origin:left center;">CGDD231101-01</div><div class="t" style="left:433.60px;top:45.70px;font-size:8px;line-height:12.0px;color:#333;font-weight:normal;transform:scale(0.9500,0.9500);transform-origin:left center;">原料仓</div><div class="t" style="left:453.90px;width:60px;text-align:right;top:44.35px;font-size:9px;line-height:13.5px;color:#333;font-weight:normal;transform:scale(0.8600,0.9556);transform-origin:right center;">36,000.00</div><div class="t" style="left:525.80px;top:86.20px;font-size:8px;line-height:12.0px;color:#333;font-weight:normal;transform:scale(0.9500,0.9500);transform-origin:left center;"><span style="font-size:9.05px;letter-spacing:-0.47px">LG</span>显示器<span style="font-size:9.05px;letter-spacing:-0.47px">2</span></div><div class="t" style="left:586.00px;top:85.65px;font-size:9px;line-height:13.5px;color:#333;font-weight:normal;transform:scale(0.8600,0.9556);transform-origin:left center;">A0024</div><div class="t" style="left:634.10px;top:86.20px;font-size:8px;line-height:12.0px;color:#333;font-weight:normal;transform:scale(0.9500,0.9500);transform-origin:left center;">组件</div><div class="t" style="left:681.80px;top:85.65px;font-size:9px;line-height:13.5px;color:#333;font-weight:normal;transform:scale(0.8600,0.9556);transform-origin:left center;">HL4000</div><div class="t" style="left:525.80px;top:106.70px;font-size:8px;line-height:12.0px;color:#333;font-weight:normal;transform:scale(0.9500,0.9500);transform-origin:left center;">雷蛇键盘</div><div class="t" style="left:586.00px;top:106.15px;font-size:9px;line-height:13.5px;color:#333;font-weight:normal;transform:scale(0.8600,0.9556);transform-origin:left center;">A0021</div><div class="t" style="left:634.10px;top:106.70px;font-size:8px;line-height:12.0px;color:#333;font-weight:normal;transform:scale(0.9500,0.9500);transform-origin:left center;">组件</div><div class="t" style="left:681.80px;top:106.15px;font-size:9px;line-height:13.5px;color:#333;font-weight:normal;transform:scale(0.8600,0.9556);transform-origin:left center;">GD200</div><div class="b" style="left:6.10px;top:85.30px;width:40.8px;height:13.3px;background:#1a7cf6;border-radius:3px"></div><div class="t" style="left:10.70px;top:87.00px;font-size:8px;line-height:12.0px;color:#fff;font-weight:normal;-webkit-text-stroke-width:0.1px;">审批<span style="letter-spacing:0.9px">...</span></div><div class="t" style="left:71.10px;top:85.35px;font-size:9px;line-height:13.5px;color:#333;font-weight:normal;transform:scale(0.8600,0.9556);transform-origin:left center;">2023-09-12</div><div class="t" style="left:136.10px;top:85.35px;font-size:9px;line-height:13.5px;color:#333;font-weight:normal;transform:scale(0.8600,0.9556);transform-origin:left center;">2023-10-12</div><div class="t" style="left:207.10px;top:86.70px;font-size:8px;line-height:12.0px;color:#333;font-weight:normal;transform:scale(0.9500,0.9500);transform-origin:left center;">示例：无锡道友云</div><div class="t" style="left:282.60px;top:86.70px;font-size:8px;line-height:12.0px;color:#333;font-weight:normal;transform:scale(0.9500,0.9500);transform-origin:left center;">示例：无锡道友</div><div class="t" style="left:282.60px;top:98.50px;font-size:8px;line-height:12.0px;color:#333;font-weight:normal;transform:scale(0.9500,0.9500);transform-origin:left center;">云-第<span style="font-size:9.05px;letter-spacing:-0.47px">7</span>份采购订单</div><div class="t" style="left:357.20px;top:85.35px;font-size:9px;line-height:13.5px;color:#333;font-weight:normal;transform:scale(0.8600,0.9556);transform-origin:left center;">CGDD231101-02</div><div class="t" style="left:433.60px;top:86.70px;font-size:8px;line-height:12.0px;color:#333;font-weight:normal;transform:scale(0.9500,0.9500);transform-origin:left center;">原料仓</div><div class="t" style="left:453.90px;width:60px;text-align:right;top:85.35px;font-size:9px;line-height:13.5px;color:#333;font-weight:normal;transform:scale(0.8600,0.9556);transform-origin:right center;">211,000.00</div><div class="t" style="left:525.80px;top:127.20px;font-size:8px;line-height:12.0px;color:#333;font-weight:normal;transform:scale(0.9500,0.9500);transform-origin:left center;"><span style="font-size:9.05px;letter-spacing:-0.47px">LG</span>显示器<span style="font-size:9.05px;letter-spacing:-0.47px">2</span></div><div class="t" style="left:586.00px;top:126.65px;font-size:9px;line-height:13.5px;color:#333;font-weight:normal;transform:scale(0.8600,0.9556);transform-origin:left center;">A0024</div><div class="t" style="left:634.10px;top:127.20px;font-size:8px;line-height:12.0px;color:#333;font-weight:normal;transform:scale(0.9500,0.9500);transform-origin:left center;">组件</div><div class="t" style="left:681.80px;top:126.65px;font-size:9px;line-height:13.5px;color:#333;font-weight:normal;transform:scale(0.8600,0.9556);transform-origin:left center;">HL4000</div><div class="t" style="left:525.80px;top:147.70px;font-size:8px;line-height:12.0px;color:#333;font-weight:normal;transform:scale(0.9500,0.9500);transform-origin:left center;"><span style="font-size:9.05px;letter-spacing:-0.47px">LG</span>显示器<span style="font-size:9.05px;letter-spacing:-0.47px">1</span></div><div class="t" style="left:586.00px;top:147.15px;font-size:9px;line-height:13.5px;color:#333;font-weight:normal;transform:scale(0.8600,0.9556);transform-origin:left center;">A0023</div><div class="t" style="left:634.10px;top:147.70px;font-size:8px;line-height:12.0px;color:#333;font-weight:normal;transform:scale(0.9500,0.9500);transform-origin:left center;">组件</div><div class="t" style="left:681.80px;top:147.15px;font-size:9px;line-height:13.5px;color:#333;font-weight:normal;transform:scale(0.8600,0.9556);transform-origin:left center;">HL3000</div><div class="b" style="left:6.10px;top:126.30px;width:40.8px;height:13.3px;background:#1a7cf6;border-radius:3px"></div><div class="t" style="left:10.70px;top:128.00px;font-size:8px;line-height:12.0px;color:#fff;font-weight:normal;-webkit-text-stroke-width:0.1px;">审批<span style="letter-spacing:0.9px">...</span></div><div class="t" style="left:71.10px;top:126.35px;font-size:9px;line-height:13.5px;color:#333;font-weight:normal;transform:scale(0.8600,0.9556);transform-origin:left center;">2023-09-11</div><div class="t" style="left:136.10px;top:126.35px;font-size:9px;line-height:13.5px;color:#333;font-weight:normal;transform:scale(0.8600,0.9556);transform-origin:left center;">2023-09-20</div><div class="t" style="left:207.10px;top:127.70px;font-size:8px;line-height:12.0px;color:#333;font-weight:normal;transform:scale(0.9500,0.9500);transform-origin:left center;">示例：无锡道友云</div><div class="t" style="left:282.60px;top:127.70px;font-size:8px;line-height:12.0px;color:#333;font-weight:normal;transform:scale(0.9500,0.9500);transform-origin:left center;">示例：无锡道友</div><div class="t" style="left:282.60px;top:139.50px;font-size:8px;line-height:12.0px;color:#333;font-weight:normal;transform:scale(0.9500,0.9500);transform-origin:left center;">云-第<span style="font-size:9.05px;letter-spacing:-0.47px">4</span>份采购订单</div><div class="t" style="left:357.20px;top:126.35px;font-size:9px;line-height:13.5px;color:#333;font-weight:normal;transform:scale(0.8600,0.9556);transform-origin:left center;">CGDD230911-01</div><div class="t" style="left:433.60px;top:127.70px;font-size:8px;line-height:12.0px;color:#333;font-weight:normal;transform:scale(0.9500,0.9500);transform-origin:left center;">原料仓</div><div class="t" style="left:453.90px;width:60px;text-align:right;top:126.35px;font-size:9px;line-height:13.5px;color:#333;font-weight:normal;transform:scale(0.8600,0.9556);transform-origin:right center;">340,000.00</div><div class="t" style="left:525.80px;top:167.65px;font-size:9px;line-height:13.5px;color:#333;font-weight:normal;transform:scale(0.8600,0.9556);transform-origin:left center;">Intel ROM</div><div class="t" style="left:586.00px;top:167.65px;font-size:9px;line-height:13.5px;color:#333;font-weight:normal;transform:scale(0.8600,0.9556);transform-origin:left center;">B0007</div><div class="t" style="left:634.10px;top:168.20px;font-size:8px;line-height:12.0px;color:#333;font-weight:normal;transform:scale(0.9500,0.9500);transform-origin:left center;">零件</div><div class="t" style="left:681.80px;top:167.65px;font-size:9px;line-height:13.5px;color:#333;font-weight:normal;transform:scale(0.8600,0.9556);transform-origin:left center;">IRom1</div><div class="t" style="left:525.80px;top:188.15px;font-size:9px;line-height:13.5px;color:#333;font-weight:normal;transform:scale(0.8600,0.9556);transform-origin:left center;">SROM2</div><div class="t" style="left:586.00px;top:188.15px;font-size:9px;line-height:13.5px;color:#333;font-weight:normal;transform:scale(0.8600,0.9556);transform-origin:left center;">B0008</div><div class="t" style="left:634.10px;top:188.70px;font-size:8px;line-height:12.0px;color:#333;font-weight:normal;transform:scale(0.9500,0.9500);transform-origin:left center;">零件</div><div class="t" style="left:681.80px;top:188.15px;font-size:9px;line-height:13.5px;color:#333;font-weight:normal;transform:scale(0.8600,0.9556);transform-origin:left center;">IRom2</div><div class="b" style="left:6.10px;top:167.30px;width:40.8px;height:13.3px;background:#1a7cf6;border-radius:3px"></div><div class="t" style="left:10.70px;top:169.00px;font-size:8px;line-height:12.0px;color:#fff;font-weight:normal;-webkit-text-stroke-width:0.1px;">审批<span style="letter-spacing:0.9px">...</span></div><div class="t" style="left:71.10px;top:167.35px;font-size:9px;line-height:13.5px;color:#333;font-weight:normal;transform:scale(0.8600,0.9556);transform-origin:left center;">2023-09-01</div><div class="t" style="left:136.10px;top:167.35px;font-size:9px;line-height:13.5px;color:#333;font-weight:normal;transform:scale(0.8600,0.9556);transform-origin:left center;">2023-09-30</div><div class="t" style="left:207.10px;top:168.70px;font-size:8px;line-height:12.0px;color:#333;font-weight:normal;transform:scale(0.9500,0.9500);transform-origin:left center;">示例：杭州道友云</div><div class="t" style="left:282.60px;top:168.70px;font-size:8px;line-height:12.0px;color:#333;font-weight:normal;transform:scale(0.9500,0.9500);transform-origin:left center;">示例：杭州道友</div><div class="t" style="left:282.60px;top:180.50px;font-size:8px;line-height:12.0px;color:#333;font-weight:normal;transform:scale(0.9500,0.9500);transform-origin:left center;">云-第<span style="font-size:9.05px;letter-spacing:-0.47px">5</span>份采购订单</div><div class="t" style="left:357.20px;top:167.35px;font-size:9px;line-height:13.5px;color:#333;font-weight:normal;transform:scale(0.8600,0.9556);transform-origin:left center;">CGDD230912-01</div><div class="t" style="left:433.60px;top:168.70px;font-size:8px;line-height:12.0px;color:#333;font-weight:normal;transform:scale(0.9500,0.9500);transform-origin:left center;">原料仓</div><div class="t" style="left:453.90px;width:60px;text-align:right;top:167.35px;font-size:9px;line-height:13.5px;color:#333;font-weight:normal;transform:scale(0.8600,0.9556);transform-origin:right center;">25,000.00</div><div class="t" style="left:525.80px;top:209.20px;font-size:8px;line-height:12.0px;color:#333;font-weight:normal;transform:scale(0.9500,0.9500);transform-origin:left center;"><span style="font-size:9.05px;letter-spacing:-0.47px">LG</span>显示器<span style="font-size:9.05px;letter-spacing:-0.47px">2</span></div><div class="t" style="left:586.00px;top:208.65px;font-size:9px;line-height:13.5px;color:#333;font-weight:normal;transform:scale(0.8600,0.9556);transform-origin:left center;">A0024</div><div class="t" style="left:634.10px;top:209.20px;font-size:8px;line-height:12.0px;color:#333;font-weight:normal;transform:scale(0.9500,0.9500);transform-origin:left center;">组件</div><div class="t" style="left:681.80px;top:208.65px;font-size:9px;line-height:13.5px;color:#333;font-weight:normal;transform:scale(0.8600,0.9556);transform-origin:left center;">HL4000</div><div class="t" style="left:525.80px;top:229.70px;font-size:8px;line-height:12.0px;color:#333;font-weight:normal;transform:scale(0.9500,0.9500);transform-origin:left center;"><span style="font-size:9.05px;letter-spacing:-0.47px">LG</span>显示器<span style="font-size:9.05px;letter-spacing:-0.47px">1</span></div><div class="t" style="left:586.00px;top:229.15px;font-size:9px;line-height:13.5px;color:#333;font-weight:normal;transform:scale(0.8600,0.9556);transform-origin:left center;">A0023</div><div class="t" style="left:634.10px;top:229.70px;font-size:8px;line-height:12.0px;color:#333;font-weight:normal;transform:scale(0.9500,0.9500);transform-origin:left center;">组件</div><div class="t" style="left:681.80px;top:229.15px;font-size:9px;line-height:13.5px;color:#333;font-weight:normal;transform:scale(0.8600,0.9556);transform-origin:left center;">HL3000</div><div class="t" style="left:525.80px;top:250.20px;font-size:8px;line-height:12.0px;color:#333;font-weight:normal;transform:scale(0.9500,0.9500);transform-origin:left center;">雷蛇鼠标</div><div class="t" style="left:586.00px;top:249.65px;font-size:9px;line-height:13.5px;color:#333;font-weight:normal;transform:scale(0.8600,0.9556);transform-origin:left center;">A0022</div><div class="t" style="left:634.10px;top:250.20px;font-size:8px;line-height:12.0px;color:#333;font-weight:normal;transform:scale(0.9500,0.9500);transform-origin:left center;">组件</div><div class="t" style="left:681.80px;top:249.65px;font-size:9px;line-height:13.5px;color:#333;font-weight:normal;transform:scale(0.8600,0.9556);transform-origin:left center;">GD200</div><div class="b" style="left:6.10px;top:208.30px;width:40.8px;height:13.3px;background:#1a7cf6;border-radius:3px"></div><div class="t" style="left:10.70px;top:210.00px;font-size:8px;line-height:12.0px;color:#fff;font-weight:normal;-webkit-text-stroke-width:0.1px;">审批<span style="letter-spacing:0.9px">...</span></div><div class="t" style="left:71.10px;top:208.35px;font-size:9px;line-height:13.5px;color:#333;font-weight:normal;transform:scale(0.8600,0.9556);transform-origin:left center;">2023-08-01</div><div class="t" style="left:136.10px;top:208.35px;font-size:9px;line-height:13.5px;color:#333;font-weight:normal;transform:scale(0.8600,0.9556);transform-origin:left center;">2023-08-30</div><div class="t" style="left:207.10px;top:209.70px;font-size:8px;line-height:12.0px;color:#333;font-weight:normal;transform:scale(0.9500,0.9500);transform-origin:left center;">示例：无锡道友云</div><div class="t" style="left:282.60px;top:209.70px;font-size:8px;line-height:12.0px;color:#333;font-weight:normal;transform:scale(0.9500,0.9500);transform-origin:left center;">示例：无锡道友</div><div class="t" style="left:282.60px;top:221.50px;font-size:8px;line-height:12.0px;color:#333;font-weight:normal;transform:scale(0.9500,0.9500);transform-origin:left center;">云-第<span style="font-size:9.05px;letter-spacing:-0.47px">5</span>份采购订单</div><div class="t" style="left:357.20px;top:208.35px;font-size:9px;line-height:13.5px;color:#333;font-weight:normal;transform:scale(0.8600,0.9556);transform-origin:left center;">CGDD230911-02</div><div class="t" style="left:433.60px;top:209.70px;font-size:8px;line-height:12.0px;color:#333;font-weight:normal;transform:scale(0.9500,0.9500);transform-origin:left center;">原料仓</div><div class="t" style="left:453.90px;width:60px;text-align:right;top:208.35px;font-size:9px;line-height:13.5px;color:#333;font-weight:normal;transform:scale(0.8600,0.9556);transform-origin:right center;">240,000.00</div></div>
<div class="b" style="left:358.6px;top:522.7px;width:717.1px;height:1px;background:#c9dcf8"></div>
<div class="b" style="left:365.4px;top:528.5px;width:18.2px;height:18.1px;border:1px solid #c5d8f6;border-radius:3px;background:#fff"></div>
<svg class="b" style="left:370px;top:533px" width="9" height="9" viewBox="0 0 9 9"><rect x="1" y="1.5" width="7" height="6" rx="1" stroke="#555" stroke-width="0.8" fill="none"/><path d="M4.5 1.5 V7.5" stroke="#555" stroke-width="0.8"/></svg>
<div class="b" style="left:387px;top:528.5px;width:66.5px;height:18.1px;border:1px solid #c5d8f6;border-radius:3px;background:#fff"></div>
<div class="t" style="left:391.50px;top:532.80px;font-size:8px;line-height:12.0px;color:#333;font-weight:normal;transform:scale(1.0250,1.0250);transform-origin:left center;">20 条/页</div>
<svg class="b" style="left:441px;top:534.6px" width="8" height="6" viewBox="0 0 8 6"><path d="M1 1.5 L4 4.5 L7 1.5" stroke="#555" stroke-width="0.9" fill="none"/></svg>
<div class="t" style="left:458.00px;top:532.80px;font-size:8px;line-height:12.0px;color:#333;font-weight:normal;transform:scale(1.0250,1.0250);transform-origin:left center;">共 13 条</div>
<div class="b" style="left:992.6px;top:528.4px;width:18.8px;height:18.1px;border:1px solid #c5d8f6;border-radius:3px;background:#f4f4f6"></div>
<svg class="b" style="left:998px;top:533.5px" width="8" height="8" viewBox="0 0 8 8"><path d="M5 1 L2 4 L5 7" stroke="#999" stroke-width="0.8" fill="none"/></svg>
<div class="b" style="left:1013.9px;top:528.4px;width:19.7px;height:18.1px;border:1px solid #c5d8f6;border-radius:3px;background:#fff"></div>
<div class="t" style="left:1013.80px;width:20px;text-align:center;top:532.80px;font-size:8px;line-height:12.0px;color:#333;font-weight:normal;transform:scale(1.0250,1.0250);transform-origin:center center;">1</div>
<div class="t" style="left:1036.00px;top:532.80px;font-size:8px;line-height:12.0px;color:#333;font-weight:normal;transform:scale(1.0250,1.0250);transform-origin:left center;">/ 1</div>
<div class="b" style="left:1050.7px;top:528.4px;width:18.8px;height:18.1px;border:1px solid #c5d8f6;border-radius:3px;background:#f4f4f6"></div>
<svg class="b" style="left:1056.5px;top:533.5px" width="8" height="8" viewBox="0 0 8 8"><path d="M3 1 L6 4 L3 7" stroke="#999" stroke-width="0.8" fill="none"/></svg>
<svg class="b" style="left:719px;top:500px" width="46" height="38" viewBox="0 0 46 38">
<path d="M17 2 C8.5 2 2 7.8 2 15 C2 19.2 4.2 22.7 7.6 25 L5.8 30.5 L12.3 27.2 C13.8 27.7 15.4 28 17 28 C25.5 28 32 22.2 32 15 C32 7.8 25.5 2 17 2 Z" fill="rgba(80,82,88,0.52)"/>
<circle cx="11.3" cy="10.8" r="2" fill="#fff" opacity="0.55"/><circle cx="21.3" cy="10.8" r="2" fill="#fff" opacity="0.55"/>
<path d="M31 12.5 C23 12.5 18 17.5 18 23.5 C18 29.5 23.5 34.5 31 34.5 C32.3 34.5 33.6 34.3 34.8 34 L40.5 37 L39 32.2 C42 30 44 27 44 23.5 C44 17.5 38.5 12.5 31 12.5 Z" fill="#fff" opacity="0.35"/>
<path d="M31 13.5 C23.5 13.5 19 18 19 23.5 C19 29 24 33.5 31 33.5 C32.3 33.5 33.6 33.3 34.8 33 L40 35.8 L38.6 31.6 C41.3 29.7 43 26.8 43 23.5 C43 18 38.5 13.5 31 13.5 Z" fill="rgba(80,82,88,0.52)"/>
<circle cx="26.5" cy="20.8" r="1.7" fill="#fff" opacity="0.55"/><circle cx="35" cy="20.8" r="1.7" fill="#fff" opacity="0.55"/>
</svg>
<div class="t" style="left:771px;top:497px;font-size:30.5px;line-height:44px;color:rgba(80,82,88,0.52);-webkit-text-stroke:0.2px rgba(80,82,88,0.52)">公众号</div>
<div class="b" style="left:876px;top:518px;width:4px;height:4px;border-radius:50%;background:rgba(80,82,88,0.52)"></div>
<div class="t" style="left:897.5px;top:498px;font-size:30.5px;line-height:44px;color:rgba(80,82,88,0.52);-webkit-text-stroke:0.2px rgba(80,82,88,0.52);letter-spacing:0.3px">IT灵感光束</div>
</div></body></html>
